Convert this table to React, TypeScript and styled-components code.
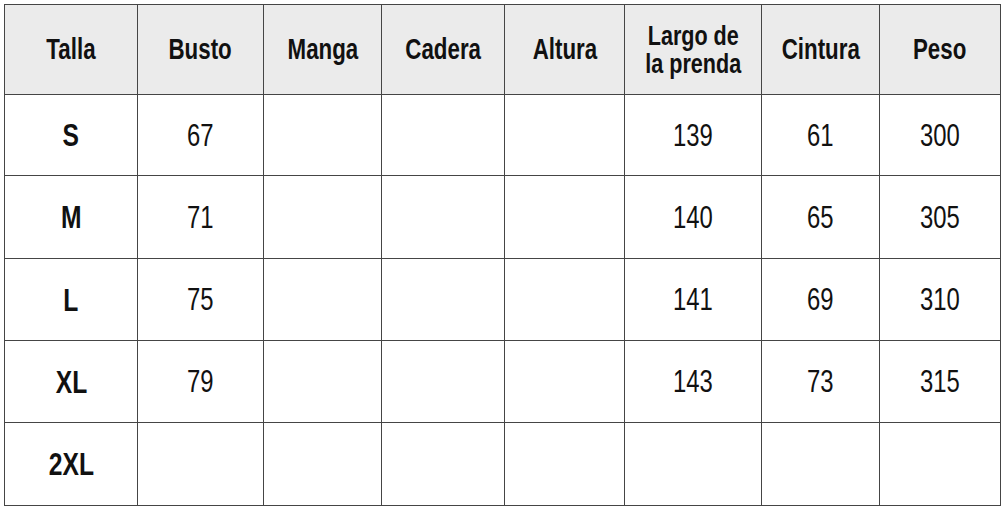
import styled, { createGlobalStyle } from 'styled-components'

const GlobalStyle = createGlobalStyle`
  html, body {
    margin: 0;
    padding: 0;
    background: #ffffff;
  }
  body {
    font-family: "Liberation Sans", Arial, sans-serif;
    color: #111111;
  }
`

const Page = styled.div`
  padding: 4px 0 0 4px;
`

const Grid = styled.div`
  display: grid;
  grid-template-columns: 132px 125px 117px 122px 119px 136px 117px 120px;
  grid-template-rows: 89px 80px 82px 81px 81px 82px;
  gap: 1px;
  padding: 1px;
  width: max-content;
  background: #454545;
`

const Cell = styled.div<{ $head?: boolean; $bold?: boolean }>`
  display: flex;
  align-items: center;
  justify-content: center;
  text-align: center;
  background: ${(p) => (p.$head ? '#ebebeb' : '#ffffff')};
  font-size: ${(p) => (p.$head ? '29px' : p.$bold ? '32px' : '31px')};
  font-weight: ${(p) => (p.$head || p.$bold ? 700 : 400)};
  line-height: 1;
  color: #111111;
`

// the reference uses a condensed grotesque; squeeze Liberation Sans to match
const Label = styled.span`
  display: inline-flex;
  flex-direction: column;
  align-items: center;
  white-space: nowrap;
  transform: scaleX(0.77);
`

const Line = styled.span`
  display: block;
  font-size: 28px;
  line-height: 28px;
`

const headers = ['Talla', 'Busto', 'Manga', 'Cadera', 'Altura', 'Largo de\nla prenda', 'Cintura', 'Peso']

const rows: string[][] = [
  ['S', '67', '', '', '', '139', '61', '300'],
  ['M', '71', '', '', '', '140', '65', '305'],
  ['L', '75', '', '', '', '141', '69', '310'],
  ['XL', '79', '', '', '', '143', '73', '315'],
  ['2XL', '', '', '', '', '', '', ''],
]

const App = () => {
  return (
    <>
      <GlobalStyle />
      <Page>
        <Grid>
          {headers.map((h) => {
            const lines = h.split('\n')
            return (
              <Cell key={h} $head>
                <Label>
                  {lines.length > 1
                    ? lines.map((line) => <Line key={line}>{line}</Line>)
                    : h}
                </Label>
              </Cell>
            )
          })}
          {rows.map((row, r) =>
            row.map((value, c) => (
              <Cell key={`${r}-${c}`} $bold={c === 0}>
                {value && <Label>{value}</Label>}
              </Cell>
            ))
          )}
        </Grid>
      </Page>
    </>
  )
}

export default App
